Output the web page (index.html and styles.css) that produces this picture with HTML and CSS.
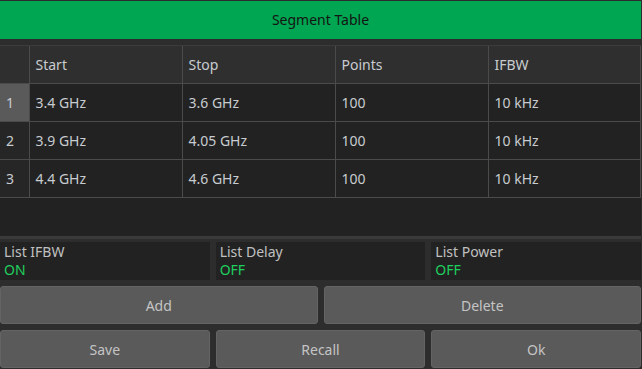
FILE: index.html
```html
<!DOCTYPE html>
<html lang="en">
<head>
    <meta charset="UTF-8">
    <title>Segment Table</title>
    <link rel="stylesheet" href="styles.css">
</head>
<body>
    <div class="dialog">
        <div class="title-bar">Segment Table</div>

        <div class="table-area">
            <table class="segments">
                <colgroup>
                    <col class="col-num">
                    <col class="col-data">
                    <col class="col-data">
                    <col class="col-data">
                    <col>
                </colgroup>
                <thead>
                    <tr>
                        <th></th>
                        <th>Start</th>
                        <th>Stop</th>
                        <th>Points</th>
                        <th>IFBW</th>
                    </tr>
                </thead>
                <tbody>
                    <tr>
                        <td class="num selected">1</td>
                        <td>3.4 GHz</td>
                        <td>3.6 GHz</td>
                        <td>100</td>
                        <td>10 kHz</td>
                    </tr>
                    <tr>
                        <td class="num">2</td>
                        <td>3.9 GHz</td>
                        <td>4.05 GHz</td>
                        <td>100</td>
                        <td>10 kHz</td>
                    </tr>
                    <tr>
                        <td class="num">3</td>
                        <td>4.4 GHz</td>
                        <td>4.6 GHz</td>
                        <td>100</td>
                        <td>10 kHz</td>
                    </tr>
                </tbody>
            </table>
        </div>
        <div class="scroll-strip"></div>

        <div class="row three">
            <div class="list-box">
                <span class="list-label">List IFBW</span>
                <span class="list-value">ON</span>
            </div>
            <div class="list-box">
                <span class="list-label">List Delay</span>
                <span class="list-value">OFF</span>
            </div>
            <div class="list-box">
                <span class="list-label">List Power</span>
                <span class="list-value">OFF</span>
            </div>
        </div>

        <div class="row two">
            <button class="btn">Add</button>
            <button class="btn">Delete</button>
        </div>

        <div class="row three">
            <button class="btn">Save</button>
            <button class="btn">Recall</button>
            <button class="btn">Ok</button>
        </div>
    </div>
</body>
</html>
```

FILE: styles.css
```css
html, body {
    margin: 0;
    padding: 0;
    background-color: #2d2d2d;
}
body {
    font-family: "Noto Sans", "Open Sans", sans-serif;
    font-size: 14px;
    color: #c8ccd0;
}
.dialog {
    width: 641px;
    height: 369px;
    padding-top: 1px;
    box-sizing: border-box;
}
.title-bar {
    height: 38px;
    line-height: 38px;
    background-color: #00a651;
    color: #141414;
    text-align: center;
}
.table-area {
    margin-top: 6px;
    height: 191px;
    background-color: #222;
    border-top: 1px solid #3c3c3c;
    box-sizing: border-box;
}
.segments {
    width: 641px;
    border-collapse: collapse;
    table-layout: fixed;
}
.col-num {
    width: 29px;
}
.col-data {
    width: 153px;
}
.segments th,
.segments td {
    height: 37px;
    padding: 0 0 0 6px;
    text-align: left;
    font-weight: normal;
    border: 1px solid #4b4b4b;
    white-space: nowrap;
}
.segments tr > :first-child {
    border-left: none;
}
.segments th {
    background-color: #2f2f2f;
    border-top: none;
}
.segments td {
    background-color: #222;
}
.segments td.num {
    background-color: #262626;
}
.segments td.selected {
    background-color: #5a5a5a;
}
.scroll-strip {
    height: 3px;
    background-color: #3a3a3a;
}
.row {
    display: grid;
    gap: 6px;
    margin-top: 6px;
    height: 38px;
}
.row.three {
    grid-template-columns: 1fr 1fr 1fr;
}
.row.two {
    grid-template-columns: 1fr 1fr;
}
.scroll-strip + .row {
    margin-top: 3px;
}
.list-box {
    background-color: #222;
    display: flex;
    flex-direction: column;
    justify-content: center;
    padding-left: 4px;
    line-height: 18px;
}
.list-label {
    color: #c0c0c0;
}
.list-value {
    color: #1fcf5e;
}
.btn {
    font-family: inherit;
    font-size: 14px;
    color: #c4c4c4;
    background-color: #5a5a5a;
    border: 1px solid #646464;
    border-radius: 3px;
    margin: 0;
    padding: 0;
}
```
